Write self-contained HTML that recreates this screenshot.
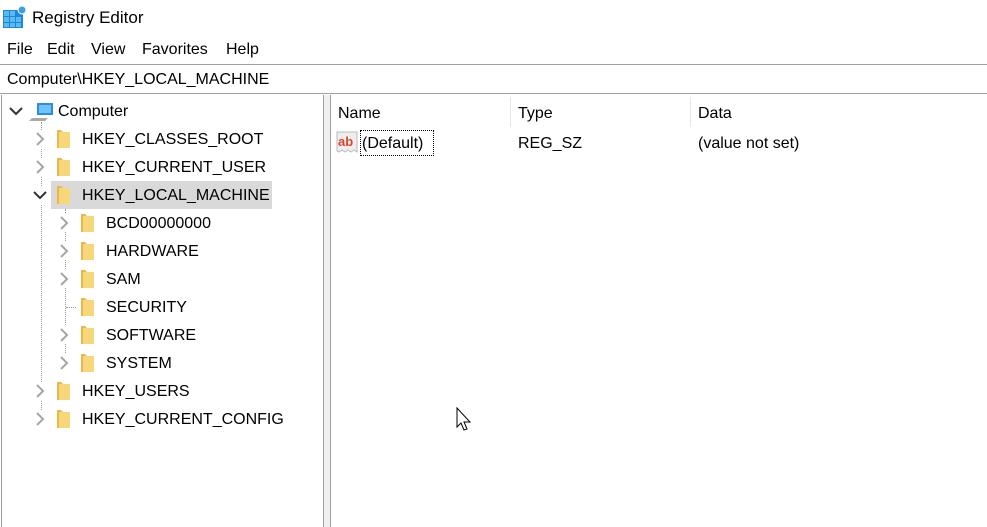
<!DOCTYPE html>
<html><head><style>
body{margin:0;width:987px;height:527px;background:#fff;font-family:"Liberation Sans",sans-serif;font-size:16px;color:#000;position:relative;overflow:hidden}
.a{position:absolute;white-space:nowrap}
.t{position:absolute;line-height:28px;height:28px;top:0}
</style></head><body>
<svg class="a" style="left:3px;top:5px" width="24" height="24" viewBox="0 0 24 24">
<rect x="0" y="5" width="20" height="18" fill="#1e88d8"/>
<g fill="#5cb8f0"><rect x="1" y="6" width="5" height="5"/><rect x="7" y="6" width="5" height="5"/><rect x="1" y="12" width="5" height="5"/><rect x="7" y="12" width="5" height="5"/><rect x="13" y="12" width="5" height="5"/><rect x="1" y="18" width="5" height="4"/><rect x="7" y="18" width="5" height="4"/><rect x="13" y="18" width="5" height="4"/></g>
<circle cx="19" cy="5" r="4" fill="#3aa0e8" stroke="#fff" stroke-width="1"/></svg>
<div class="a" style="left:32px;top:8px;font-size:17px">Registry Editor</div>
<div class="a" style="left:7px;top:41px">File</div>
<div class="a" style="left:47px;top:41px">Edit</div>
<div class="a" style="left:91px;top:41px">View</div>
<div class="a" style="left:142px;top:41px">Favorites</div>
<div class="a" style="left:226px;top:41px">Help</div>
<div class="a" style="left:0;top:64px;width:987px;height:30px;border-top:1px solid #a0a0a0;border-bottom:1px solid #a0a0a0;box-sizing:border-box"></div>
<div class="a" style="left:7px;top:71px">Computer\HKEY_LOCAL_MACHINE</div>
<div class="a" style="left:1px;top:95px;width:1px;height:432px;background:#a0a0a0"></div>
<div class="a" style="left:323px;top:95px;width:1px;height:432px;background:#a0a0a0"></div>
<div class="a" style="left:324px;top:95px;width:6px;height:432px;background:#f0f0f0"></div>
<div class="a" style="left:330px;top:95px;width:1px;height:432px;background:#a0a0a0"></div>
<div class="a" style="left:51px;top:181px;width:221px;height:28px;background:#d9d9d9"></div>
<div class="a" style="left:41px;top:122px;height:296px;border-left:1px dotted #999"></div>
<div class="a" style="left:65px;top:209px;height:154px;border-left:1px dotted #999"></div>
<div class="a" style="left:66px;top:307px;width:10px;border-top:1px dotted #999"></div>
<svg class="a" style="left:0;top:0" width="330" height="440">
<g fill="#fff"><rect x="34" y="130" width="14" height="18"/><rect x="34" y="158" width="14" height="18"/><rect x="34" y="186" width="14" height="18"/><rect x="34" y="382" width="14" height="18"/><rect x="34" y="410" width="14" height="18"/>
<rect x="58" y="214" width="14" height="18"/><rect x="58" y="242" width="14" height="18"/><rect x="58" y="270" width="14" height="18"/><rect x="58" y="326" width="14" height="18"/><rect x="58" y="354" width="14" height="18"/></g>
<rect x="34" y="186" width="14" height="18" fill="#fff"/>
<g fill="none" stroke="#333" stroke-width="2"><path d="M10 108l6 6 6-6"/><path d="M34 192l6 6 6-6"/></g>
<g fill="none" stroke="#a6a6a6" stroke-width="2">
<path d="M37 133l6 6-6 6"/><path d="M37 161l6 6-6 6"/><path d="M37 385l6 6-6 6"/><path d="M37 413l6 6-6 6"/>
<path d="M61 217l6 6-6 6"/><path d="M61 245l6 6-6 6"/><path d="M61 273l6 6-6 6"/><path d="M61 329l6 6-6 6"/><path d="M61 357l6 6-6 6"/></g>
<rect x="37" y="103" width="16" height="12" fill="#2c8ce0"/>
<rect x="39" y="105" width="12" height="8" fill="#6cc4f8"/>
<path d="M32 118h16l-3 3h-16z" fill="#aaa"/>
</svg>
<svg class="a" style="left:0;top:0" width="330" height="440">
<defs><g id="fo"><path d="M0 0h4l2 2v16h-6z" fill="#e8b84a"/><path d="M2 2h11v16h-11z" fill="#f8d77a"/></g></defs>
<use href="#fo" x="57" y="130"/><use href="#fo" x="57" y="158"/><use href="#fo" x="57" y="186"/>
<use href="#fo" x="81" y="214"/><use href="#fo" x="81" y="242"/><use href="#fo" x="81" y="270"/><use href="#fo" x="81" y="298"/><use href="#fo" x="81" y="326"/><use href="#fo" x="81" y="354"/>
<use href="#fo" x="57" y="382"/><use href="#fo" x="57" y="410"/>
</svg>
<div class="t" style="left:58px;top:98px">Computer</div>
<div class="t" style="left:82px;top:126px">HKEY_CLASSES_ROOT</div>
<div class="t" style="left:82px;top:154px">HKEY_CURRENT_USER</div>
<div class="t" style="left:82px;top:182px">HKEY_LOCAL_MACHINE</div>
<div class="t" style="left:106px;top:210px">BCD00000000</div>
<div class="t" style="left:106px;top:238px">HARDWARE</div>
<div class="t" style="left:106px;top:266px">SAM</div>
<div class="t" style="left:106px;top:294px">SECURITY</div>
<div class="t" style="left:106px;top:322px">SOFTWARE</div>
<div class="t" style="left:106px;top:350px">SYSTEM</div>
<div class="t" style="left:82px;top:378px">HKEY_USERS</div>
<div class="t" style="left:82px;top:406px">HKEY_CURRENT_CONFIG</div>
<div class="a" style="left:510px;top:97px;width:1px;height:30px;background:#e5e5e5"></div>
<div class="a" style="left:690px;top:97px;width:1px;height:30px;background:#e5e5e5"></div>
<div class="a" style="left:338px;top:105px">Name</div>
<div class="a" style="left:518px;top:105px">Type</div>
<div class="a" style="left:698px;top:105px">Data</div>
<svg class="a" style="left:336px;top:131px" width="24" height="24"><path d="M1 1h20v20l-3-2-3 2-3-2-3 2-3-2-3 2-2-1z" fill="#eee" stroke="#bbb"/><text x="2" y="15" font-family="Liberation Sans" font-weight="bold" font-size="13" fill="#d9452a">ab</text></svg>
<div class="a" style="left:360px;top:130px;width:74px;height:26px;border:1px dotted #000;box-sizing:border-box"></div>
<div class="a" style="left:362px;top:135px">(Default)</div>
<div class="a" style="left:518px;top:135px">REG_SZ</div>
<div class="a" style="left:698px;top:135px">(value not set)</div>
<svg class="a" style="left:456px;top:407px" width="20" height="28"><path d="M1 1v19l4-4 3 7 3-1-3-7h6z" fill="#fff" stroke="#000" stroke-width="1"/></svg>
</body></html>
